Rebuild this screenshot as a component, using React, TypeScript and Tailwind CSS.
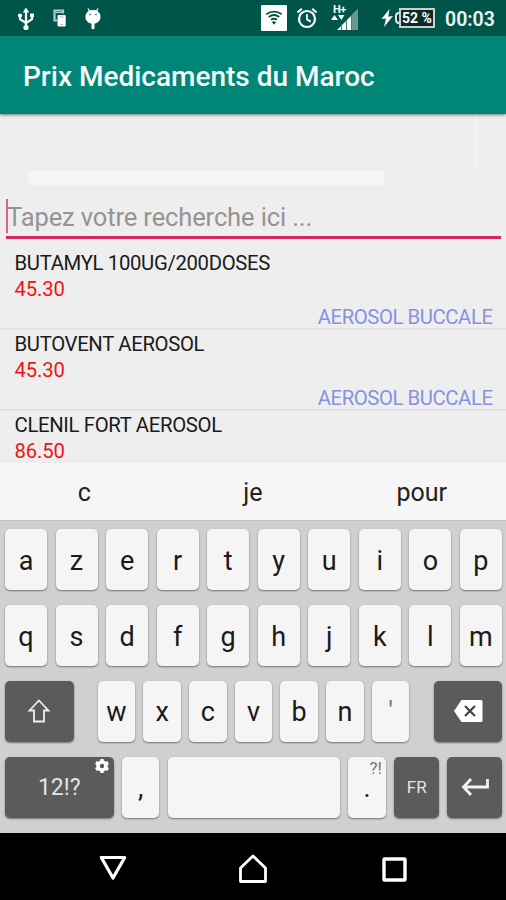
import React from 'react';

interface Medicament {
  name: string;
  price: string;
  form?: string;
}

const medicaments: Medicament[] = [
  { name: 'BUTAMYL 100UG/200DOSES', price: '45.30', form: 'AEROSOL BUCCALE' },
  { name: 'BUTOVENT AEROSOL', price: '45.30', form: 'AEROSOL BUCCALE' },
  { name: 'CLENIL FORT AEROSOL', price: '86.50' },
];

const suggestions = ['c', 'je', 'pour'];
const firstRow = ['a', 'z', 'e', 'r', 't', 'y', 'u', 'i', 'o', 'p'];
const secondRow = ['q', 's', 'd', 'f', 'g', 'h', 'j', 'k', 'l', 'm'];
const thirdRow = ['w', 'x', 'c', 'v', 'b', 'n'];

const lightKey =
  'flex h-[60.5px] items-center justify-center rounded-[5px] bg-[#f5f5f5] text-[27px] leading-none text-[#1a1a1a] shadow-[0_1px_2px_rgba(0,0,0,0.45)]';
const darkKey =
  'flex h-[60.5px] items-center justify-center rounded-[5px] bg-[#5b5b5b] leading-none text-[#e4e4e4] shadow-[0_1px_2px_rgba(0,0,0,0.45)]';

const StatusBar: React.FC = () => (
  <div className="flex h-9 shrink-0 items-center bg-[#00554b] text-white">
    {/* USB */}
    <svg className="ml-[17px] mt-[2px] h-6 w-[18px]" viewBox="0 0 18 24" fill="none" stroke="white" strokeWidth="2.2">
      <path d="M9 4V20M3 9v3.2L9 16M15 9v3.2L9 16" />
      <path d="M9 .5 5.8 5.500h6.400z" fill="white" stroke="none" />
      <circle cx="9" cy="20.5" r="2.6" fill="white" stroke="none" />
      <circle cx="3" cy="8.500" r="2.1" fill="white" stroke="none" />
      <path d="M13 6.500h4v3.600h-4z" fill="white" stroke="none" />
    </svg>
    {/* Screen mirroring */}
    <svg className="ml-[17px] h-5 w-4" viewBox="0 0 16 20" fill="none">
      <path d="M11 5.500V2.500H2.500V12.500H5" stroke="#b5cac7" strokeWidth="2.200" />
      <path d="M3.5 4.500h6.500" stroke="#b5cac7" strokeWidth="1.200" />
      <rect x="5.500" y="7" width="8.200" height="11.500" rx="1" fill="white" />
      <path d="M7.500 9h4.200M8.500 16.5h2.500" stroke="#a5beba" strokeWidth="1" />
    </svg>
    {/* Android debug */}
    <svg className="ml-[16px] h-[23px] w-[18px]" viewBox="0 0 18 23">
      <path d="m4 1.5 2 3.5M14 1.5 12 5" stroke="white" strokeWidth="1.3" />
      <path d="M9 3c4.600 0 7.500 2.700 7.500 7 0 3.600-2.400 5.800-6 6.800v4.400c0 1.500-3 1.500-3 0v-4.400C3.900 15.800 1.500 13.600 1.500 10 1.500 5.700 4.400 3 9 3Z" fill="white" />
      <circle cx="6" cy="7.500" r="0.8" fill="#00554b" />
      <circle cx="12" cy="7.500" r="0.8" fill="#00554b" />
    </svg>
    {/* Wifi */}
    <svg className="ml-auto h-[26px] w-[26px]" viewBox="0 0 26 26" fill="none" stroke="#0b5148" strokeWidth="1.800">
      <rect width="26" height="26" rx="1" fill="white" stroke="none" />
      <path d="M5.300 9.200c4.600-3.500 10.800-3.500 15.400 0M7.700 12c3.200-2.400 7.400-2.400 10.600 0M10 14.800c2-1.400 4-1.400 6 0" />
      <path d="m10.800 17 2.200 2.700 2.200-2.700c-1.300-1-3.100-1-4.400 0Z" fill="#0b5148" stroke="none" />
    </svg>
    {/* Alarm */}
    <svg className="ml-[9px] h-[22px] w-[22px]" viewBox="0 0 22 22" fill="none" stroke="white" strokeWidth="2.200">
      <circle cx="11" cy="12" r="8" />
      <path d="M11 7.200V12.400l3.800 2.200" strokeWidth="1.800" />
      <path d="m1.500 5.500 4.300-3.800M20.500 5.500l-4.300-3.800" />
    </svg>
    {/* Mobile signal with H+ */}
    <div className="relative ml-[13px] h-[28px] w-[30px]">
      <span className="absolute left-[2px] top-px text-[11px] font-bold leading-[10px] tracking-tighter">H+</span>
      <svg className="h-[28px] w-[30px]" viewBox="0 0 30 28">
        <path d="M0 16 3.500 11 7 16zM7 11H13.500L10.300 16z" fill="white" />
        <path d="M6 26 21 11V26z" fill="white" />
        <path d="M21 10.500 27 4.500V26H21z" fill="#669990" />
        <path d="M10.500 20V26M15.500 16V26M20.500 11V26" stroke="#477e76" strokeWidth="1" />
      </svg>
    </div>
    {/* Battery */}
    <svg className="ml-[20px] h-[18px] w-[12px]" viewBox="0 0 12 18">
      <path d="M8.500 0 .5 10l4.500-.6L3 18 12 7 7.200 7.800z" fill="white" />
    </svg>
    <div className="ml-[2px] flex items-center">
      <div className="h-[12px] w-[4px] rounded-l-sm border-y-2 border-l-2 border-[#dce7e5] bg-[#102a26]" />
      <div className="flex h-[20px] w-[36px] items-center justify-center border-2 border-[#c4d2d0] bg-[#102a26] text-[14px] font-bold leading-none">
        <span className="whitespace-nowrap">52 %</span>
      </div>
    </div>
    <span className="ml-[10px] mr-[11px] mt-[3px] w-[50px] whitespace-nowrap text-[19.500px] font-semibold leading-none text-[#eef5f4]">
      00:03
    </span>
  </div>
);

const MedicamentRow: React.FC<{ item: Medicament }> = ({ item }) => (
  <div className="h-[81.300px] shrink-0 border-b-2 border-[#e0e0e0] pl-[14.500px] pr-[13.500px] text-[20.300px]">
    <p className="h-[27px] leading-[29px] tracking-[-0.320px] text-[#1a1a1a]">{item.name}</p>
    <p className="h-[26px] leading-[27px] tracking-[-0.150px] text-[#f31212]">{item.price}</p>
    {item.form && (
      <p className="h-[27px] text-right leading-[30px] tracking-[-0.420px] text-[#8891e0]">{item.form}</p>
    )}
  </div>
);

const Keyboard: React.FC = () => (
  <div className="flex h-[313px] shrink-0 flex-col gap-[15.500px] border-t border-[#c4c4c4] bg-[#d0d0d0] pl-[5px] pr-[4px] pt-[8px]">
    {[firstRow, secondRow].map((row, index) => (
      <div key={index} className="flex justify-between">
        {row.map(letter => (
          <div key={letter} className={`${lightKey} w-[42px] pt-[4px]`}>{letter}</div>
        ))}
      </div>
    ))}

    <div className="flex justify-between">
      <div className={`${darkKey} w-[68.500px]`}>
        <svg className="h-6 w-6" viewBox="0 0 24 24" fill="none" stroke="#eee" strokeWidth="1.800">
          <path d="M12 1.500 21.500 11.500H17V22.500H7V11.500H2.500z" />
        </svg>
      </div>
      <div className="flex gap-[8px]">
        {thirdRow.map(letter => (
          <div key={letter} className={`${lightKey} w-[37.700px] pt-[3px]`}>{letter}</div>
        ))}
        <div className={`${lightKey} w-[37.700px] pt-[3px]`}>
          <span className="text-[#777]">'</span>
        </div>
      </div>
      <div className={`${darkKey} w-[68.500px]`}>
        <svg className="h-6 w-[30px]" viewBox="0 0 30 24">
          <path d="M8.500 1H28q1.500 0 1.500 1.500V21.500q0 1.500-1.500 1.500H8.500L1 12z" fill="white" />
          <path d="m12 7 10 10M22 7 12 17" stroke="#444" strokeWidth="2.200" />
        </svg>
      </div>
    </div>

    <div className="flex justify-between">
      <div className={`${darkKey} relative w-[108.500px] text-[23px]`}>
        <span>12!?</span>
        <svg className="absolute right-[4.500px] top-[2px] h-[14px] w-[14px]" viewBox="0 0 14 14">
          <circle cx="7" cy="7" r="4" fill="none" stroke="white" strokeWidth="3.600" />
          <path d="M7 0v3M7 11v3M.9 3.500l2.600 1.500M10.500 9l2.600 1.500M.9 10.500 3.500 9M10.500 5l2.600-1.500" stroke="white" strokeWidth="3.200" />
          <circle cx="7" cy="7" r="1.800" fill="#5b5b5b" />
        </svg>
      </div>
      <div className={`${lightKey} w-[37.500px] pt-[3px]`}>,</div>
      <div className={`${lightKey} w-[172.500px]`} />
      <div className={`${lightKey} relative w-[37.500px] pt-[3px]`}>
        .
        <span className="absolute right-[4px] top-[3px] text-[17px] leading-none text-[#777]">?!</span>
      </div>
      <div className={`${darkKey} w-[45px] text-[17px]`}>FR</div>
      <div className={`${darkKey} w-[54.500px]`}>
        <svg className="h-5 w-7" viewBox="0 0 28 20" fill="none" stroke="#f2f2f2" strokeWidth="2.800">
          <path d="M26.500 2V10H2.500M10 2 2.500 10 10 18" />
        </svg>
      </div>
    </div>
  </div>
);

const NavigationBar: React.FC = () => (
  <div className="flex h-[67px] shrink-0 items-center justify-between bg-black px-[98.500px] pt-[4px]">
    <svg className="h-7 w-7" viewBox="0 0 28 28" fill="none" stroke="white" strokeWidth="3.200" strokeLinejoin="round">
      <path d="M2.300 2.500H25.700L14 23z" />
    </svg>
    <svg className="h-[30px] w-[30px]" viewBox="0 0 30 30" fill="none" stroke="white" strokeWidth="2.800" strokeLinejoin="round">
      <path d="M15 2 27.500 14V27.500H2.500V14z" />
    </svg>
    <svg className="h-7 w-7" viewBox="0 0 28 28" fill="none" stroke="white" strokeWidth="3.400">
      <rect x="4" y="4" width="21" height="21" rx="0.500" />
    </svg>
  </div>
);

const App: React.FC = () => {
  return (
    <div className="flex h-[900px] w-[506px] flex-col overflow-hidden bg-[#eeeeee] font-['Roboto',sans-serif]">
      <StatusBar />

      <header className="z-10 flex h-[78px] shrink-0 items-center bg-[#008577] pl-[23px] pt-[4px] shadow-[0_1px_3px_rgba(0,0,0,0.5)]">
        <h1 className="whitespace-nowrap text-[28px] font-medium leading-none text-[#f5fbfa]">Prix Medicaments du Maroc</h1>
      </header>

      <main className="flex h-[348.500px] shrink-0 flex-col">
        {/* Bannière vide */}
        <div className="flex h-[57px] shrink-0 justify-end pr-[28px]">
          <div className="w-[3px] bg-[#f3f3f3]" />
        </div>
        <div className="ml-[28px] h-[14px] w-[356px] shrink-0 bg-[#f5f5f5]" />

        <div className="ml-[6px] mr-[5px] mt-[14px] flex h-[39.500px] shrink-0 items-start border-b-[3px] border-[#d42a64]">
          <div className="h-[34px] w-[2px] bg-[#dd6388]" />
          <span className="-ml-px whitespace-nowrap text-[25.500px] leading-[36px] tracking-[-0.120px] text-[#949494]">
            Tapez votre recherche ici ...
          </span>
        </div>

        <div className="mt-[10px] flex flex-col">
          {medicaments.map(item => (
            <MedicamentRow key={item.name} item={item} />
          ))}
        </div>
      </main>

      <div className="z-10 grid h-[57.500px] shrink-0 grid-cols-3 items-center bg-[#f6f6f6] pt-[2px] text-center text-[25px] text-[#222]">
        {suggestions.map(word => (
          <span key={word}>{word}</span>
        ))}
      </div>

      <Keyboard />
      <NavigationBar />
    </div>
  );
};

export default App;
